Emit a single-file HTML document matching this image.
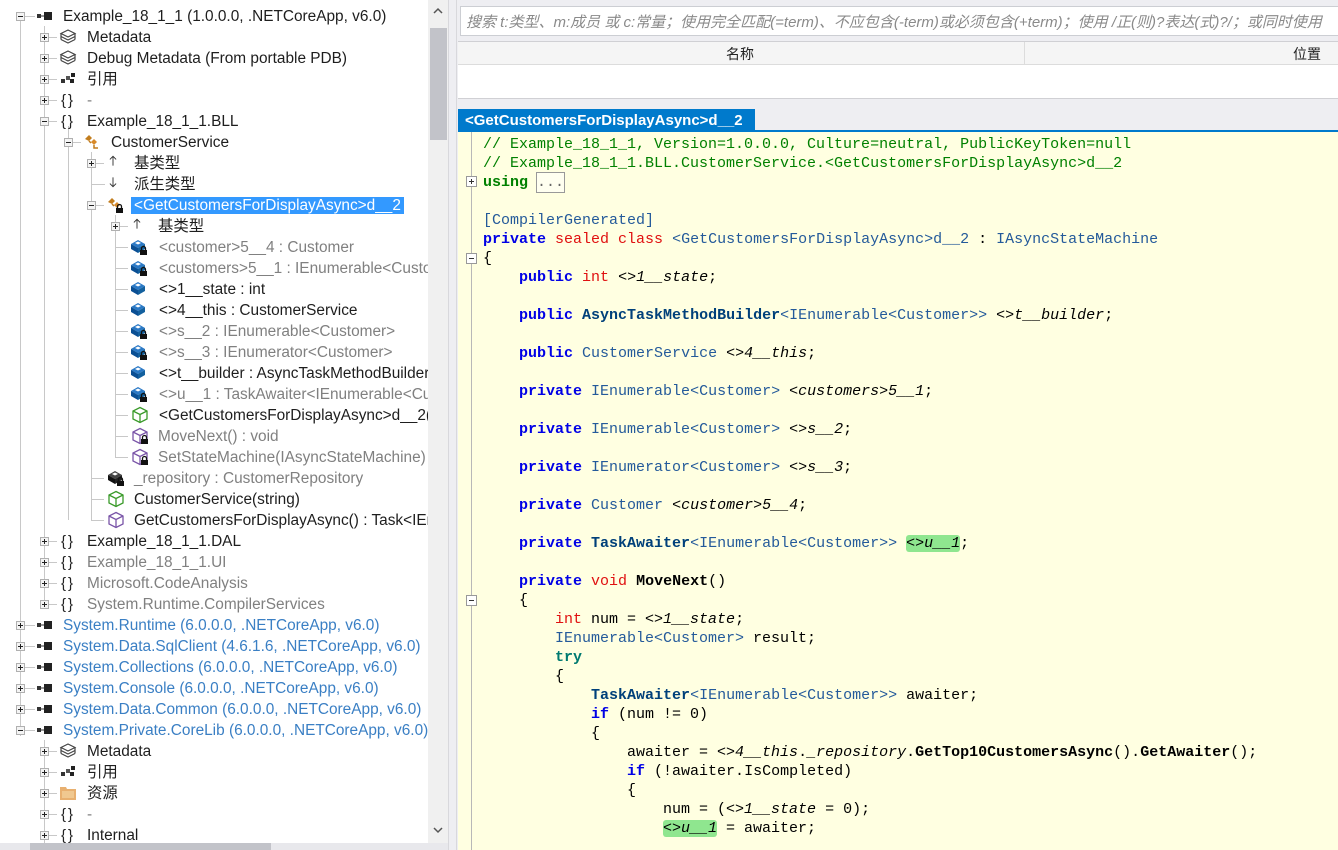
<!DOCTYPE html>
<html><head><meta charset="utf-8"><style>
*{margin:0;padding:0;box-sizing:border-box}
body{width:1338px;height:850px;overflow:hidden;background:#eeeef2;position:relative;font-family:"Liberation Sans","Noto Sans CJK SC",sans-serif}
#tree{position:absolute;left:0;top:0;width:428px;height:843px;background:#fff;overflow:hidden}
.r{position:absolute;height:21px;line-height:21px;font-size:15.4px;white-space:nowrap;color:#1e1e1e}
.g{color:#808080}.b{color:#3a7fc4}
.sel{background:#3399ff;color:#fff;padding:0 3px;margin-left:-3px}
.ex{position:absolute;width:9px;height:9px;border:1px solid #b0b0b0;background:#f4f4f4}
.ex::before{content:"";position:absolute;left:1px;top:3px;width:5px;height:1px;background:#222}
.ex.p::after{content:"";position:absolute;left:3px;top:1px;width:1px;height:5px;background:#222}
.hl{position:absolute;height:1px;background:#c8c8c8}
.vl{position:absolute;width:1px;background:#c8c8c8}
.ic{position:absolute;width:18px;height:18px}
.ns{position:absolute;font-size:15px;color:#222;letter-spacing:2px;margin-top:3px}
#code{position:absolute;left:458px;top:132px;width:880px;height:718px;background:#ffffe1;overflow:hidden}
pre{position:absolute;left:25px;top:3px;font-family:"Liberation Mono",monospace;font-size:15px;line-height:19px;color:#000}
.c{color:#008000}.k{color:#0000e6;font-weight:bold}.rd{color:#e01010}.t{color:#245a9a}.tb{color:#00407a;font-weight:bold}.i{font-style:italic}.m{font-weight:bold}.tr{color:#007a70;font-weight:bold}
.h{background:#8fe68f;border-radius:3px}
.box{position:absolute;left:8px;width:11px;height:11px;border:1px solid #999;background:#fff}
.box::before{content:"";position:absolute;left:2px;top:4px;width:5px;height:1px;background:#333}
.box.p::after{content:"";position:absolute;left:4px;top:2px;width:1px;height:5px;background:#333}
</style></head><body>
<svg width="0" height="0" style="position:absolute">
<defs>
<symbol id="asm" viewBox="0 0 18 18"><rect x="1" y="7" width="4" height="4" fill="#333"/><rect x="5" y="8.5" width="3" height="1" fill="#333"/><rect x="8" y="5" width="8" height="8" fill="#222"/></symbol>
<symbol id="meta" viewBox="0 0 18 18"><g fill="none" stroke="#444" stroke-width="1.2"><path d="M9 2 L16 5.5 L9 9 L2 5.5Z"/><path d="M2 8.5 L9 12 L16 8.5"/><path d="M2 11.5 L9 15 L16 11.5"/><path d="M2 5.5V11.5M16 5.5V11.5"/></g></symbol>
<symbol id="refs" viewBox="0 0 18 18"><rect x="2" y="9" width="4" height="4" fill="#333"/><rect x="7" y="6" width="4" height="4" fill="#555"/><rect x="12" y="3" width="4" height="4" fill="#222"/><rect x="11" y="9" width="4" height="4" fill="#222"/></symbol>
<symbol id="cls" viewBox="0 0 18 18"><path d="M2 6 L6 2 L9 5 L6 8Z" fill="#c27d1e"/><path d="M8 9 L11 6 L14 9 L11 12Z" fill="#d88a2a"/><path d="M6 8 L8 10 M11 12 V15 H15" stroke="#c27d1e" stroke-width="1.5" fill="none"/></symbol>
<symbol id="lock" viewBox="0 0 18 18"><rect x="10" y="12" width="7" height="5" fill="#111"/><path d="M11.5 12 V10.5 A2 2 0 0 1 15.5 10.5 V12" stroke="#111" stroke-width="1.3" fill="none"/></symbol>
<symbol id="fld" viewBox="0 0 18 18"><path d="M1 6 L8 2 L15 6 L8 10Z" fill="#2a79c6"/><path d="M1 6 V11 L8 15 V10Z" fill="#0a4f94"/><path d="M15 6 V11 L8 15 V10Z" fill="#13609e"/><path d="M5 5 L8 3.5 L11 5 L8 6.5Z" fill="#fff"/></symbol>
<symbol id="fldk" viewBox="0 0 18 18"><path d="M1 6 L8 2 L15 6 L8 10Z" fill="#444"/><path d="M1 6 V11 L8 15 V10Z" fill="#111"/><path d="M15 6 V11 L8 15 V10Z" fill="#222"/><path d="M5 5 L8 3.5 L11 5 L8 6.5Z" fill="#fff"/></symbol>
<symbol id="cubeg" viewBox="0 0 18 18"><g fill="none" stroke="#3a9a2a" stroke-width="1.3"><path d="M9 1.5 L16 5 V13 L9 16.5 L2 13 V5Z"/><path d="M2 5 L9 8.5 L16 5 M9 8.5 V16.5"/></g></symbol>
<symbol id="cubep" viewBox="0 0 18 18"><g fill="none" stroke="#7a55a8" stroke-width="1.3"><path d="M9 1.5 L16 5 V13 L9 16.5 L2 13 V5Z"/><path d="M2 5 L9 8.5 L16 5 M9 8.5 V16.5"/></g></symbol>
<symbol id="up" viewBox="0 0 18 18"><path d="M9 3 V15 M5 7 L9 3 L13 7" stroke="#333" stroke-width="1.2" fill="none"/></symbol>
<symbol id="dn" viewBox="0 0 18 18"><path d="M9 3 V15 M5 11 L9 15 L13 11" stroke="#333" stroke-width="1.2" fill="none"/></symbol>
<symbol id="fold" viewBox="0 0 18 18"><path d="M1 3 H7 L8 5 H17 V16 H1Z" fill="#e8b070"/><rect x="3" y="7" width="12" height="7" fill="#f0c890"/></symbol>
</defs></svg>

<div id="tree">
<div class="vl" style="left:20px;top:16px;height:720px"></div>
<div class="vl" style="left:44px;top:26px;height:574px"></div>
<div class="vl" style="left:44px;top:740px;height:110px"></div>
<div class="vl" style="left:68px;top:126px;height:394px"></div>
<div class="vl" style="left:91px;top:152px;height:368px"></div>
<div class="vl" style="left:115px;top:215px;height:242px"></div>

<div class="ex" style="left:16px;top:12px"></div><div class="hl" style="left:25px;top:16px;width:10px"></div><svg class="ic" style="left:36px;top:7px"><use href="#asm"/></svg><div class="r" style="left:63px;top:6px">Example_18_1_1 (1.0.0.0, .NETCoreApp, v6.0)</div>
<div class="ex p" style="left:40px;top:33px"></div><div class="hl" style="left:49px;top:37px;width:8px"></div><svg class="ic" style="left:59px;top:28px"><use href="#meta"/></svg><div class="r" style="left:87px;top:27px">Metadata</div>
<div class="ex p" style="left:40px;top:54px"></div><div class="hl" style="left:49px;top:58px;width:8px"></div><svg class="ic" style="left:59px;top:49px"><use href="#meta"/></svg><div class="r" style="left:87px;top:48px">Debug Metadata (From portable PDB)</div>
<div class="ex p" style="left:40px;top:75px"></div><div class="hl" style="left:49px;top:79px;width:8px"></div><svg class="ic" style="left:59px;top:70px"><use href="#refs"/></svg><div class="r" style="left:87px;top:69px">引用</div>
<div class="ex p" style="left:40px;top:96px"></div><div class="hl" style="left:49px;top:100px;width:8px"></div><div class="ns" style="left:61px;top:89px">{}</div><div class="r g" style="left:87px;top:90px">-</div>
<div class="ex" style="left:40px;top:117px"></div><div class="hl" style="left:49px;top:121px;width:8px"></div><div class="ns" style="left:61px;top:110px">{}</div><div class="r" style="left:87px;top:111px">Example_18_1_1.BLL</div>
<div class="ex" style="left:64px;top:138px"></div><div class="hl" style="left:73px;top:142px;width:8px"></div><svg class="ic" style="left:83px;top:133px"><use href="#cls"/></svg><div class="r" style="left:111px;top:132px">CustomerService</div>
<div class="ex p" style="left:87px;top:159px"></div><div class="hl" style="left:96px;top:163px;width:8px"></div><svg class="ic" style="left:106px;top:154px;width:14px;height:14px"><use href="#up"/></svg><div class="r" style="left:134px;top:153px">基类型</div>
<div class="hl" style="left:91px;top:184px;width:14px"></div><svg class="ic" style="left:106px;top:175px;width:14px;height:14px"><use href="#dn"/></svg><div class="r" style="left:134px;top:174px">派生类型</div>
<div class="ex" style="left:87px;top:201px"></div><div class="hl" style="left:96px;top:205px;width:8px"></div><svg class="ic" style="left:106px;top:196px"><use href="#cls"/><use href="#lock"/></svg><div class="r" style="left:134px;top:195px"><span class="sel">&lt;GetCustomersForDisplayAsync&gt;d__2</span></div>
<div class="ex p" style="left:111px;top:222px"></div><div class="hl" style="left:120px;top:226px;width:8px"></div><svg class="ic" style="left:130px;top:217px;width:14px;height:14px"><use href="#up"/></svg><div class="r" style="left:158px;top:216px">基类型</div>
<div class="hl" style="left:115px;top:247px;width:13px"></div><svg class="ic" style="left:130px;top:238px"><use href="#fld"/><use href="#lock"/></svg><div class="r g" style="left:159px;top:237px">&lt;customer&gt;5__4 : Customer</div>
<div class="hl" style="left:115px;top:268px;width:13px"></div><svg class="ic" style="left:130px;top:259px"><use href="#fld"/><use href="#lock"/></svg><div class="r g" style="left:159px;top:258px">&lt;customers&gt;5__1 : IEnumerable&lt;Customer&gt;</div>
<div class="hl" style="left:115px;top:289px;width:13px"></div><svg class="ic" style="left:130px;top:280px"><use href="#fld"/></svg><div class="r" style="left:159px;top:279px">&lt;&gt;1__state : int</div>
<div class="hl" style="left:115px;top:310px;width:13px"></div><svg class="ic" style="left:130px;top:301px"><use href="#fld"/></svg><div class="r" style="left:159px;top:300px">&lt;&gt;4__this : CustomerService</div>
<div class="hl" style="left:115px;top:331px;width:13px"></div><svg class="ic" style="left:130px;top:322px"><use href="#fld"/><use href="#lock"/></svg><div class="r g" style="left:159px;top:321px">&lt;&gt;s__2 : IEnumerable&lt;Customer&gt;</div>
<div class="hl" style="left:115px;top:352px;width:13px"></div><svg class="ic" style="left:130px;top:343px"><use href="#fld"/><use href="#lock"/></svg><div class="r g" style="left:159px;top:342px">&lt;&gt;s__3 : IEnumerator&lt;Customer&gt;</div>
<div class="hl" style="left:115px;top:373px;width:13px"></div><svg class="ic" style="left:130px;top:364px"><use href="#fld"/></svg><div class="r" style="left:159px;top:363px">&lt;&gt;t__builder : AsyncTaskMethodBuilder&lt;IEnumerable</div>
<div class="hl" style="left:115px;top:394px;width:13px"></div><svg class="ic" style="left:130px;top:385px"><use href="#fld"/><use href="#lock"/></svg><div class="r g" style="left:159px;top:384px">&lt;&gt;u__1 : TaskAwaiter&lt;IEnumerable&lt;Customer&gt;&gt;</div>
<div class="hl" style="left:115px;top:415px;width:13px"></div><svg class="ic" style="left:131px;top:406px"><use href="#cubeg"/></svg><div class="r" style="left:159px;top:405px">&lt;GetCustomersForDisplayAsync&gt;d__2()</div>
<div class="hl" style="left:115px;top:436px;width:13px"></div><svg class="ic" style="left:131px;top:427px"><use href="#cubep"/><use href="#lock"/></svg><div class="r g" style="left:158px;top:426px">MoveNext() : void</div>
<div class="hl" style="left:115px;top:457px;width:13px"></div><svg class="ic" style="left:131px;top:448px"><use href="#cubep"/><use href="#lock"/></svg><div class="r g" style="left:158px;top:447px">SetStateMachine(IAsyncStateMachine)</div>
<div class="hl" style="left:91px;top:478px;width:13px"></div><svg class="ic" style="left:107px;top:469px"><use href="#fldk"/><use href="#lock"/></svg><div class="r g" style="left:134px;top:468px">_repository : CustomerRepository</div>
<div class="hl" style="left:91px;top:499px;width:13px"></div><svg class="ic" style="left:107px;top:490px"><use href="#cubeg"/></svg><div class="r" style="left:134px;top:489px">CustomerService(string)</div>
<div class="hl" style="left:91px;top:520px;width:13px"></div><svg class="ic" style="left:107px;top:511px"><use href="#cubep"/></svg><div class="r" style="left:134px;top:510px">GetCustomersForDisplayAsync() : Task&lt;IEnumerable</div>
<div class="ex p" style="left:40px;top:537px"></div><div class="hl" style="left:49px;top:541px;width:8px"></div><div class="ns" style="left:61px;top:530px">{}</div><div class="r" style="left:87px;top:531px">Example_18_1_1.DAL</div>
<div class="ex p" style="left:40px;top:558px"></div><div class="hl" style="left:49px;top:562px;width:8px"></div><div class="ns" style="left:61px;top:551px">{}</div><div class="r g" style="left:87px;top:552px">Example_18_1_1.UI</div>
<div class="ex p" style="left:40px;top:579px"></div><div class="hl" style="left:49px;top:583px;width:8px"></div><div class="ns" style="left:61px;top:572px">{}</div><div class="r g" style="left:87px;top:573px">Microsoft.CodeAnalysis</div>
<div class="ex p" style="left:40px;top:600px"></div><div class="hl" style="left:49px;top:604px;width:8px"></div><div class="ns" style="left:61px;top:593px">{}</div><div class="r g" style="left:87px;top:594px">System.Runtime.CompilerServices</div>
<div class="ex p" style="left:16px;top:621px"></div><div class="hl" style="left:25px;top:625px;width:10px"></div><svg class="ic" style="left:36px;top:616px"><use href="#asm"/></svg><div class="r b" style="left:63px;top:615px">System.Runtime (6.0.0.0, .NETCoreApp, v6.0)</div>
<div class="ex p" style="left:16px;top:642px"></div><div class="hl" style="left:25px;top:646px;width:10px"></div><svg class="ic" style="left:36px;top:637px"><use href="#asm"/></svg><div class="r b" style="left:63px;top:636px">System.Data.SqlClient (4.6.1.6, .NETCoreApp, v6.0)</div>
<div class="ex p" style="left:16px;top:663px"></div><div class="hl" style="left:25px;top:667px;width:10px"></div><svg class="ic" style="left:36px;top:658px"><use href="#asm"/></svg><div class="r b" style="left:63px;top:657px">System.Collections (6.0.0.0, .NETCoreApp, v6.0)</div>
<div class="ex p" style="left:16px;top:684px"></div><div class="hl" style="left:25px;top:688px;width:10px"></div><svg class="ic" style="left:36px;top:679px"><use href="#asm"/></svg><div class="r b" style="left:63px;top:678px">System.Console (6.0.0.0, .NETCoreApp, v6.0)</div>
<div class="ex p" style="left:16px;top:705px"></div><div class="hl" style="left:25px;top:709px;width:10px"></div><svg class="ic" style="left:36px;top:700px"><use href="#asm"/></svg><div class="r b" style="left:63px;top:699px">System.Data.Common (6.0.0.0, .NETCoreApp, v6.0)</div>
<div class="ex" style="left:16px;top:726px"></div><div class="hl" style="left:25px;top:730px;width:10px"></div><svg class="ic" style="left:36px;top:721px"><use href="#asm"/></svg><div class="r b" style="left:63px;top:720px">System.Private.CoreLib (6.0.0.0, .NETCoreApp, v6.0)</div>
<div class="ex p" style="left:40px;top:747px"></div><div class="hl" style="left:49px;top:751px;width:8px"></div><svg class="ic" style="left:59px;top:742px"><use href="#meta"/></svg><div class="r" style="left:87px;top:741px">Metadata</div>
<div class="ex p" style="left:40px;top:768px"></div><div class="hl" style="left:49px;top:772px;width:8px"></div><svg class="ic" style="left:59px;top:763px"><use href="#refs"/></svg><div class="r" style="left:87px;top:762px">引用</div>
<div class="ex p" style="left:40px;top:789px"></div><div class="hl" style="left:49px;top:793px;width:8px"></div><svg class="ic" style="left:59px;top:784px"><use href="#fold"/></svg><div class="r" style="left:87px;top:783px">资源</div>
<div class="ex p" style="left:40px;top:810px"></div><div class="hl" style="left:49px;top:814px;width:8px"></div><div class="ns" style="left:61px;top:803px">{}</div><div class="r g" style="left:87px;top:804px">-</div>
<div class="ex p" style="left:40px;top:831px"></div><div class="hl" style="left:49px;top:835px;width:8px"></div><div class="ns" style="left:61px;top:824px">{}</div><div class="r" style="left:87px;top:825px">Internal</div>
</div>

<div style="position:absolute;left:428px;top:0;width:20px;height:843px;background:#f0f0f0"></div>
<div style="position:absolute;left:430px;top:28px;width:17px;height:112px;background:#c2c3c9"></div>
<svg style="position:absolute;left:432px;top:826px" width="12" height="10"><path d="M2 2 L6 6 L10 2" stroke="#555" stroke-width="1.5" fill="none"/></svg>
<svg style="position:absolute;left:432px;top:6px" width="12" height="10"><path d="M2 7 L6 3 L10 7" stroke="#555" stroke-width="1.5" fill="none"/></svg>
<div style="position:absolute;left:0;top:843px;width:448px;height:7px;background:#e8e8ec"></div>
<div style="position:absolute;left:30px;top:843px;width:241px;height:7px;background:#c2c3c9"></div>
<div style="position:absolute;left:448px;top:0;width:1px;height:850px;background:#d8d8dc"></div>
<div style="position:absolute;left:456px;top:0;width:1px;height:850px;background:#d8d8dc"></div>

<div style="position:absolute;left:460px;top:6px;width:878px;height:30px;background:#fff;border:1px solid #ccced3;border-right:none"></div>
<div style="position:absolute;left:466px;top:11px;font-size:15px;color:#8a8a8a;font-style:italic;white-space:nowrap">搜索 t:类型、m:成员 或 c:常量；使用完全匹配(=term)、不应包含(-term)或必须包含(+term)；使用 /正(则)?表达(式)?/；或同时使用</div>
<div style="position:absolute;left:458px;top:41px;width:880px;height:58px;background:#fff;border-top:1px solid #d0d0d4;border-bottom:1px solid #d0d0d4"></div>
<div style="position:absolute;left:458px;top:42px;width:880px;height:23px;background:#f5f5f5;border-bottom:1px solid #dcdcdc"></div>
<div style="position:absolute;left:1024px;top:42px;width:1px;height:23px;background:#dcdcdc"></div>
<div style="position:absolute;left:726px;top:44px;font-size:14px;color:#222">名称</div>
<div style="position:absolute;left:1293px;top:44px;font-size:14px;color:#222">位置</div>

<div style="position:absolute;left:458px;top:109px;width:297px;height:23px;background:#007acc;color:#fff;font-size:15px;line-height:24px;padding-left:7px;font-weight:bold;white-space:nowrap">&lt;GetCustomersForDisplayAsync&gt;d__2</div>
<div style="position:absolute;left:755px;top:130px;width:583px;height:2px;background:#007acc"></div>

<div id="code">
<div style="position:absolute;left:13px;top:0;width:1px;height:718px;background:#b8b8b8"></div>
<div class="box p" style="top:44px"></div>
<div class="box" style="top:121px"></div>
<div class="box" style="top:463px"></div>
<div style="position:absolute;left:78px;top:40px;width:29px;height:21px;border:1px solid #999;background:#fffff0"></div>
<pre><span class="c">// Example_18_1_1, Version=1.0.0.0, Culture=neutral, PublicKeyToken=null</span>
<span class="c">// Example_18_1_1.BLL.CustomerService.&lt;GetCustomersForDisplayAsync&gt;d__2</span>
<span class="c" style="font-weight:bold">using</span> <span style="color:#666">...</span>

<span class="t">[CompilerGenerated]</span>
<span class="k">private</span> <span class="rd">sealed class</span> <span class="t">&lt;GetCustomersForDisplayAsync&gt;d__2</span> : <span class="t">IAsyncStateMachine</span>
{
    <span class="k">public</span> <span class="rd">int</span> <span class="i">&lt;&gt;1__state</span>;

    <span class="k">public</span> <span class="tb">AsyncTaskMethodBuilder</span><span class="t">&lt;IEnumerable&lt;Customer&gt;&gt;</span> <span class="i">&lt;&gt;t__builder</span>;

    <span class="k">public</span> <span class="t">CustomerService</span> <span class="i">&lt;&gt;4__this</span>;

    <span class="k">private</span> <span class="t">IEnumerable&lt;Customer&gt;</span> <span class="i">&lt;customers&gt;5__1</span>;

    <span class="k">private</span> <span class="t">IEnumerable&lt;Customer&gt;</span> <span class="i">&lt;&gt;s__2</span>;

    <span class="k">private</span> <span class="t">IEnumerator&lt;Customer&gt;</span> <span class="i">&lt;&gt;s__3</span>;

    <span class="k">private</span> <span class="t">Customer</span> <span class="i">&lt;customer&gt;5__4</span>;

    <span class="k">private</span> <span class="tb">TaskAwaiter</span><span class="t">&lt;IEnumerable&lt;Customer&gt;&gt;</span> <span class="i h">&lt;&gt;u__1</span>;

    <span class="k">private</span> <span class="rd">void</span> <span class="m">MoveNext</span>()
    {
        <span class="rd">int</span> num = <span class="i">&lt;&gt;1__state</span>;
        <span class="t">IEnumerable&lt;Customer&gt;</span> result;
        <span class="tr">try</span>
        {
            <span class="tb">TaskAwaiter</span><span class="t">&lt;IEnumerable&lt;Customer&gt;&gt;</span> awaiter;
            <span class="k">if</span> (num != 0)
            {
                awaiter = <span class="i">&lt;&gt;4__this</span>.<span class="i">_repository</span>.<span class="m">GetTop10CustomersAsync</span>().<span class="m">GetAwaiter</span>();
                <span class="k">if</span> (!awaiter.IsCompleted)
                {
                    num = (<span class="i">&lt;&gt;1__state</span> = 0);
                    <span class="i h">&lt;&gt;u__1</span> = awaiter;
</pre>
</div>
</body></html>
